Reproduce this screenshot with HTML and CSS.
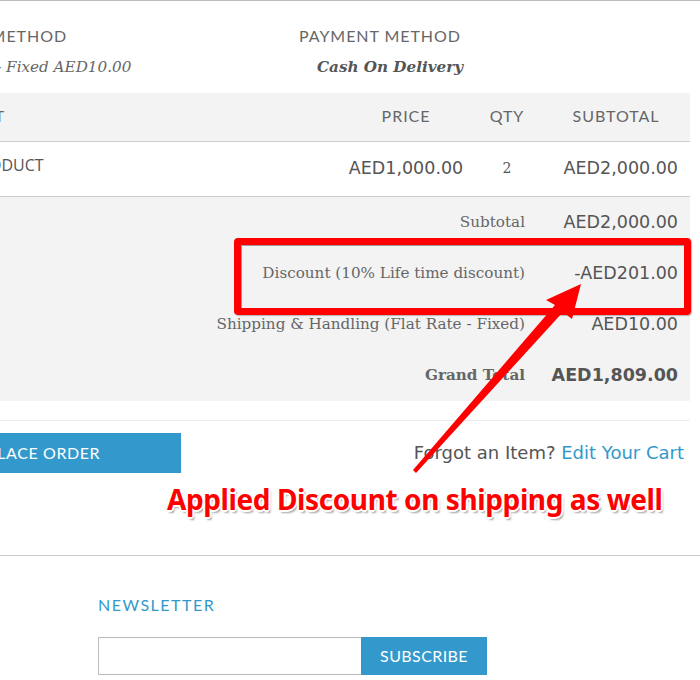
FILE: index.html
```html
<!DOCTYPE html>
<html>
<head>
<meta charset="utf-8">
<link rel="stylesheet" href="styles.css">
</head>
<body>
<div class="screen">
  <main class="page">
    <section class="methods">
      <div class="method">
        <h3 class="method-title">SHIPPING METHOD</h3>
        <p class="method-value method-ship">Flat Rate - Fixed AED10.00</p>
      </div>
      <div class="method method-pay">
        <h3 class="method-title">PAYMENT METHOD</h3>
        <p class="method-value method-strong">Cash On Delivery</p>
      </div>
    </section>

    <div class="grid thead">
      <div class="c-product">PRODUCT</div>
      <div class="c-price">PRICE</div>
      <div class="c-qty">QTY</div>
      <div class="c-sub">SUBTOTAL</div>
    </div>
    <div class="grid trow">
      <div class="c-product">TEST PRODUCT</div>
      <div class="c-price money">AED1,000.00</div>
      <div class="c-qty qty">2</div>
      <div class="c-sub money right">AED2,000.00</div>
    </div>

    <div class="totals">
      <div class="tot-row"><span class="tot-label">Subtotal</span><span class="money tot-val">AED2,000.00</span></div>
      <div class="tot-row"><span class="tot-label">Discount (10% Life time discount)</span><span class="money tot-val">-AED201.00</span></div>
      <div class="tot-row"><span class="tot-label">Shipping &amp; Handling (Flat Rate - Fixed)</span><span class="money tot-val">AED10.00</span></div>
      <div class="tot-row grand"><span class="tot-label">Grand Total</span><span class="money tot-val">AED1,809.00</span></div>
    </div>

    <div class="actions">
      <button class="btn-place">PLACE ORDER</button>
      <p class="forgot">Forgot an Item? <a href="#">Edit Your Cart</a></p>
    </div>
  </main>

  <footer class="footer">
    <h4 class="news-title">NEWSLETTER</h4>
    <form class="news-form">
      <input class="news-input" type="text">
      <button class="btn-sub" type="button">SUBSCRIBE</button>
    </form>
  </footer>

  <div class="callout-box"></div>
  <svg class="callout-arrow" width="700" height="680" viewBox="0 0 700 680">
    <polygon points="581,283 572,318 563,311 416,472 413,469 555,304 546,299" fill="#ff0000"/>
  </svg>
  <p class="callout-text">Applied Discount on shipping as well</p>
</div>
</body>
</html>
```

FILE: styles.css
```css
html, body {
  margin: 0;
  padding: 0;
  background: #fff;
}
body {
  width: 700px;
  height: 680px;
  overflow: hidden;
}
.screen {
  position: relative;
  width: 700px;
  height: 680px;
  overflow: hidden;
  border-top: 1px solid #bbb;
  box-sizing: border-box;
}
.page {
  margin-left: -100px;
  width: 790px;
}

/* methods */
.methods {
  display: grid;
  grid-template-columns: 399px 1fr;
  padding-top: 25px;
  height: 67px;
}
.method {
  padding-left: 5px;
}
.method-title {
  margin: 0;
  font-family: Lato, "Open Sans", sans-serif;
  font-weight: 400;
  font-size: 16px;
  line-height: 20px;
  letter-spacing: 0.95px;
  color: #666;
}
.method-value {
  margin: 11px 0 0;
  font-family: "DejaVu Serif", serif;
  font-style: italic;
  font-size: 15.2px;
  line-height: 20px;
  color: #666;
}
.method-ship {
  padding-left: 15px;
}
.method-pay {
  padding-left: 0;
}
.method-strong {
  font-weight: 700;
  padding-left: 18px;
  color: #555;
}

/* table */
.grid {
  display: grid;
  grid-template-columns: 440px 132px 70px 148px;
  align-items: center;
}
.thead {
  height: 48px;
  background: #f3f3f3;
  border-bottom: 1px solid #ccc;
  font-family: Lato, "Open Sans", sans-serif;
  font-size: 16px;
  letter-spacing: 0.95px;
  color: #666;
}
.thead > div {
  margin-top: -4px;
}
.thead .c-product {
  padding-left: 22px;
}
.c-price, .c-qty, .c-sub {
  text-align: center;
}
.trow {
  height: 54px;
  border-bottom: 1px solid #ccc;
  color: #555;
}
.trow > div {
  margin-top: -3px;
}
.trow .c-product {
  padding-left: 30px;
  font-family: "Open Sans", sans-serif;
  font-size: 16px;
  align-self: start;
  margin-top: 0;
  padding-top: 12px;
  line-height: 22px;
}
.money {
  font-family: "DejaVu Sans", Verdana, sans-serif;
  font-size: 17.5px;
  color: #555;
}
.right {
  text-align: right;
  padding-right: 12px;
}
.qty {
  font-family: "DejaVu Serif", serif;
  font-size: 14px;
}

/* totals */
.totals {
  background: #f3f3f3;
  padding-bottom: 0;
}
.tot-row {
  display: grid;
  grid-template-columns: 1fr 165px;
  height: 51px;
  align-items: center;
  padding-bottom: 2px;
  box-sizing: border-box;
}
.tot-label {
  text-align: right;
  font-family: "DejaVu Serif", serif;
  font-size: 15.2px;
  color: #666;
}
.tot-val {
  text-align: right;
  padding-right: 12px;
}
.grand .tot-label,
.grand .tot-val {
  font-weight: 700;
}

/* actions */
.actions {
  margin-top: 19px;
  border-top: 1px solid #eee;
  padding-top: 12px;
  display: flex;
  justify-content: space-between;
  align-items: center;
}
.btn-place {
  margin-left: 70px;
  width: 211px;
  height: 40px;
  border: 0;
  background: #3399cc;
  color: #fff;
  font-family: Lato, "Open Sans", sans-serif;
  font-size: 16px;
  letter-spacing: 0.6px;
  text-align: left;
  padding-left: 17px;
  padding-bottom: 2px;
}
.forgot {
  margin: -2px 6px 0 0;
  font-family: "DejaVu Sans", Verdana, sans-serif;
  font-size: 18px;
  color: #555;
}
.forgot a {
  color: #3399cc;
  text-decoration: none;
}

/* footer */
.footer {
  position: absolute;
  left: 0;
  top: 554px;
  width: 700px;
  border-top: 1px solid #ccc;
  padding: 39px 0 0 98px;
  box-sizing: border-box;
}
.news-title {
  margin: 0;
  font-family: Lato, "Open Sans", sans-serif;
  font-weight: 400;
  font-size: 16px;
  line-height: 20px;
  letter-spacing: 1.5px;
  color: #3399cc;
}
.news-form {
  display: flex;
  margin-top: 22px;
}
.news-input {
  width: 263px;
  height: 38px;
  box-sizing: border-box;
  border: 1px solid #bbb;
  border-right: 0;
  margin: 0;
}
.btn-sub {
  width: 126px;
  height: 38px;
  border: 0;
  margin: 0;
  background: #3399cc;
  color: #fff;
  font-family: Lato, "Open Sans", sans-serif;
  font-size: 16px;
  letter-spacing: 0.4px;
  padding-bottom: 2px;
}

/* annotation overlay */
.callout-box {
  position: absolute;
  left: 234px;
  top: 237px;
  width: 457px;
  height: 77px;
  box-sizing: border-box;
  border: 7px solid #ff0000;
  border-radius: 4px;
  box-shadow: inset 1px 1px 0 rgba(0,0,0,0.35), 1px 1px 1px rgba(0,0,0,0.25);
}
.callout-arrow {
  position: absolute;
  left: 0;
  top: 0;
  pointer-events: none;
}
.callout-text {
  position: absolute;
  left: 167px;
  top: 478px;
  margin: 0;
  font-family: "Noto Sans", "Open Sans", sans-serif;
  font-weight: 700;
  font-size: 28px;
  line-height: 40px;
  letter-spacing: -0.4px;
  color: #ff0000;
  white-space: nowrap;
  text-shadow:
    -2px 0 #fff, 2px 0 #fff, 0 -2px #fff, 0 2px #fff,
    -1px -1px #fff, 1px -1px #fff, -1px 1px #fff, 1px 1px #fff,
    2px 3px 2px rgba(0,0,0,0.35);
}
```
